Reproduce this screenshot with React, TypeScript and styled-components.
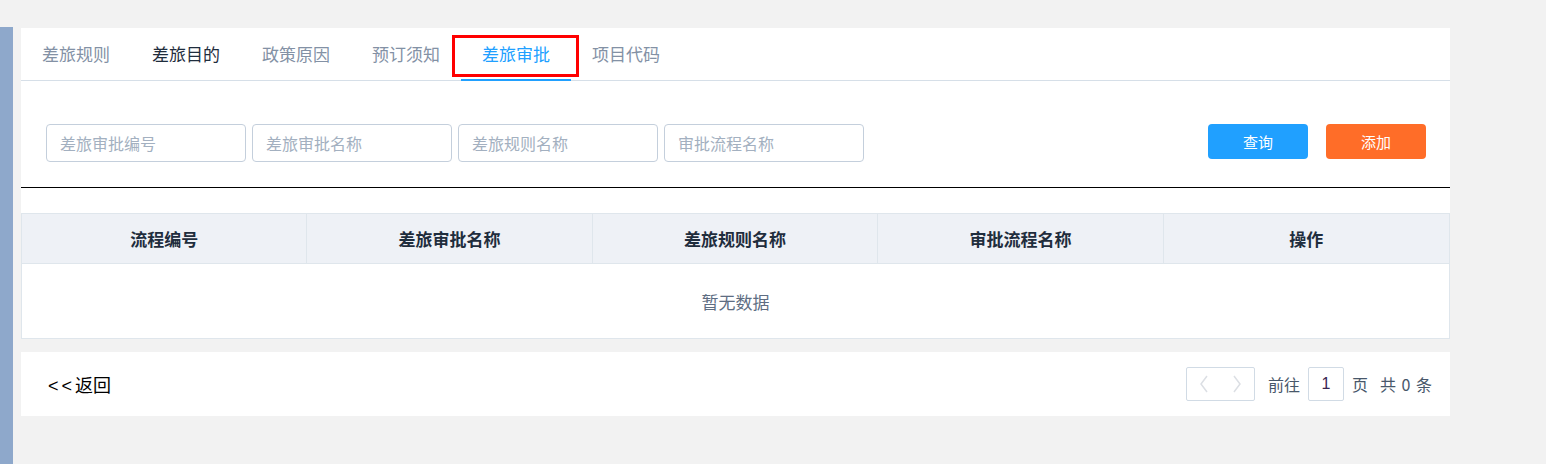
import React from 'react';
import styled, { createGlobalStyle } from 'styled-components';

const GlobalStyle = createGlobalStyle`
  html, body {
    margin: 0;
    padding: 0;
    background: #f2f2f2;
    font-family: "Noto Sans CJK SC", "Noto Sans", "Liberation Sans", sans-serif;
  }
  * { box-sizing: border-box; }
`;

const Page = styled.div`
  display: flex;
  height: 464px;
  padding-top: 27px;
`;

const SideBar = styled.div`
  width: 13px;
  flex: none;
  background: #8ea8cb;
`;

const Content = styled.div`
  width: 1429px;
  margin-left: 8px;
  padding-top: 1px;
  display: flex;
  flex-direction: column;
`;

const Panel = styled.div`
  background: #fff;
  height: 310px;
`;

const TabBar = styled.div`
  display: flex;
  height: 53px;
  border-bottom: 1px solid #d6dfe8;
`;

const Tab = styled.div<{ active?: boolean; dark?: boolean }>`
  position: relative;
  width: 110px;
  height: 52px;
  line-height: 52px;
  text-align: center;
  font-size: 17px;
  color: ${(p) => (p.active ? '#20a0ff' : p.dark ? '#1f2d3d' : '#8391a5')};
  cursor: pointer;

  &::after {
    content: '';
    display: ${(p) => (p.active ? 'block' : 'none')};
    position: absolute;
    left: 0;
    right: 0;
    bottom: -1px;
    height: 2px;
    background: #20a0ff;
  }
`;

const Highlight = styled.div`
  position: absolute;
  left: -9px;
  top: 7px;
  width: 127px;
  height: 42px;
  border: 3px solid #ff0000;
  pointer-events: none;
`;

const FilterRow = styled.div`
  display: flex;
  align-items: flex-start;
  justify-content: space-between;
  padding: 43px 24px 0 25px;
  height: 107px;
  border-bottom: 1px solid #000;
`;

const Inputs = styled.div`
  display: flex;
  gap: 6px;
`;

const SearchInput = styled.input`
  width: 200px;
  height: 38px;
  border: 1px solid #c4cfdc;
  border-radius: 4px;
  padding: 0 13px;
  font-size: 16px;
  font-family: inherit;
  color: #1f2d3d;
  outline: none;

  &::placeholder {
    color: #a3b0c0;
  }
`;

const Buttons = styled.div`
  display: flex;
  gap: 18px;
`;

const Button = styled.button<{ tone: string }>`
  width: 100px;
  height: 35px;
  border: none;
  border-radius: 4px;
  background: ${(p) => p.tone};
  color: #fff;
  font-size: 15px;
  font-family: inherit;
  cursor: pointer;
`;

const Table = styled.div`
  margin-top: 25px;
  border: 1px solid #dfe6ec;
`;

const HeadRow = styled.div`
  display: grid;
  grid-template-columns: repeat(5, 1fr);
  height: 50px;
  background: #eef1f6;
  border-bottom: 1px solid #dfe6ec;
`;

const HeadCell = styled.div`
  display: flex;
  align-items: center;
  justify-content: center;
  font-size: 17px;
  font-weight: 700;
  color: #1f2d3d;
  border-right: 1px solid #dfe6ec;

  &:last-child {
    border-right: none;
  }
`;

const Empty = styled.div`
  height: 74px;
  display: flex;
  align-items: center;
  justify-content: center;
  font-size: 17px;
  color: #5e6d82;
`;

const Footer = styled.div`
  margin-top: 14px;
  height: 64px;
  background: #fff;
  display: flex;
  align-items: center;
  justify-content: space-between;
  padding: 0 18px 0 27px;
`;

const Back = styled.a`
  font-size: 18px;
  color: #000;
  cursor: pointer;
`;

const Arrows = styled.span`
  font-family: "Liberation Sans", sans-serif;
  font-size: 18px;
  letter-spacing: 3px;
`;

const Pager = styled.div`
  display: flex;
  align-items: center;
  font-size: 16px;
  color: #48576a;
`;

const PagerNav = styled.div`
  display: flex;
  width: 69px;
  height: 34px;
  border: 1px solid #d1dbe5;
  border-radius: 2px;
  margin-right: 13px;
`;

const NavButton = styled.span`
  flex: 1;
  display: flex;
  align-items: center;
  justify-content: center;
`;

const PageInput = styled.div`
  width: 36px;
  height: 34px;
  margin: 0 8px 0 8px;
  border: 1px solid #d1dbe5;
  border-radius: 2px;
  display: flex;
  align-items: center;
  justify-content: center;
  color: #3a2550;
  font-family: "Liberation Sans", sans-serif;
`;

const Total = styled.span`
  margin-left: 12px;
  word-spacing: 2px;
`;

const Chevron = ({ dir }: { dir: 'left' | 'right' }) => (
  <svg width="10" height="18" viewBox="0 0 10 18">
    <polyline
      points={dir === 'left' ? '8,1 2,9 8,17' : '2,1 8,9 2,17'}
      fill="none"
      stroke="#dcdfe4"
      strokeWidth="1.5"
    />
  </svg>
);

const tabs = ['差旅规则', '差旅目的', '政策原因', '预订须知', '差旅审批', '项目代码'];
const columns = ['流程编号', '差旅审批名称', '差旅规则名称', '审批流程名称', '操作'];
const filters = ['差旅审批编号', '差旅审批名称', '差旅规则名称', '审批流程名称'];

export default function App() {
  return (
    <>
      <GlobalStyle />
      <Page>
        <SideBar />
        <Content>
          <Panel>
            <TabBar>
              {tabs.map((t, i) => (
                <Tab key={t} active={i === 4} dark={i === 1}>
                  {t}
                  {i === 4 && <Highlight />}
                </Tab>
              ))}
            </TabBar>
            <FilterRow>
              <Inputs>
                {filters.map((f) => (
                  <SearchInput key={f} placeholder={f} />
                ))}
              </Inputs>
              <Buttons>
                <Button tone="#20a0ff">查询</Button>
                <Button tone="#ff6d28">添加</Button>
              </Buttons>
            </FilterRow>
            <Table>
              <HeadRow>
                {columns.map((c) => (
                  <HeadCell key={c}>{c}</HeadCell>
                ))}
              </HeadRow>
              <Empty>暂无数据</Empty>
            </Table>
          </Panel>
          <Footer>
            <Back>
              <Arrows>&lt;&lt;</Arrows>返回
            </Back>
            <Pager>
              <PagerNav>
                <NavButton>
                  <Chevron dir="left" />
                </NavButton>
                <NavButton>
                  <Chevron dir="right" />
                </NavButton>
              </PagerNav>
              前往
              <PageInput>1</PageInput>
              页
              <Total>共 0 条</Total>
            </Pager>
          </Footer>
        </Content>
      </Page>
    </>
  );
}
